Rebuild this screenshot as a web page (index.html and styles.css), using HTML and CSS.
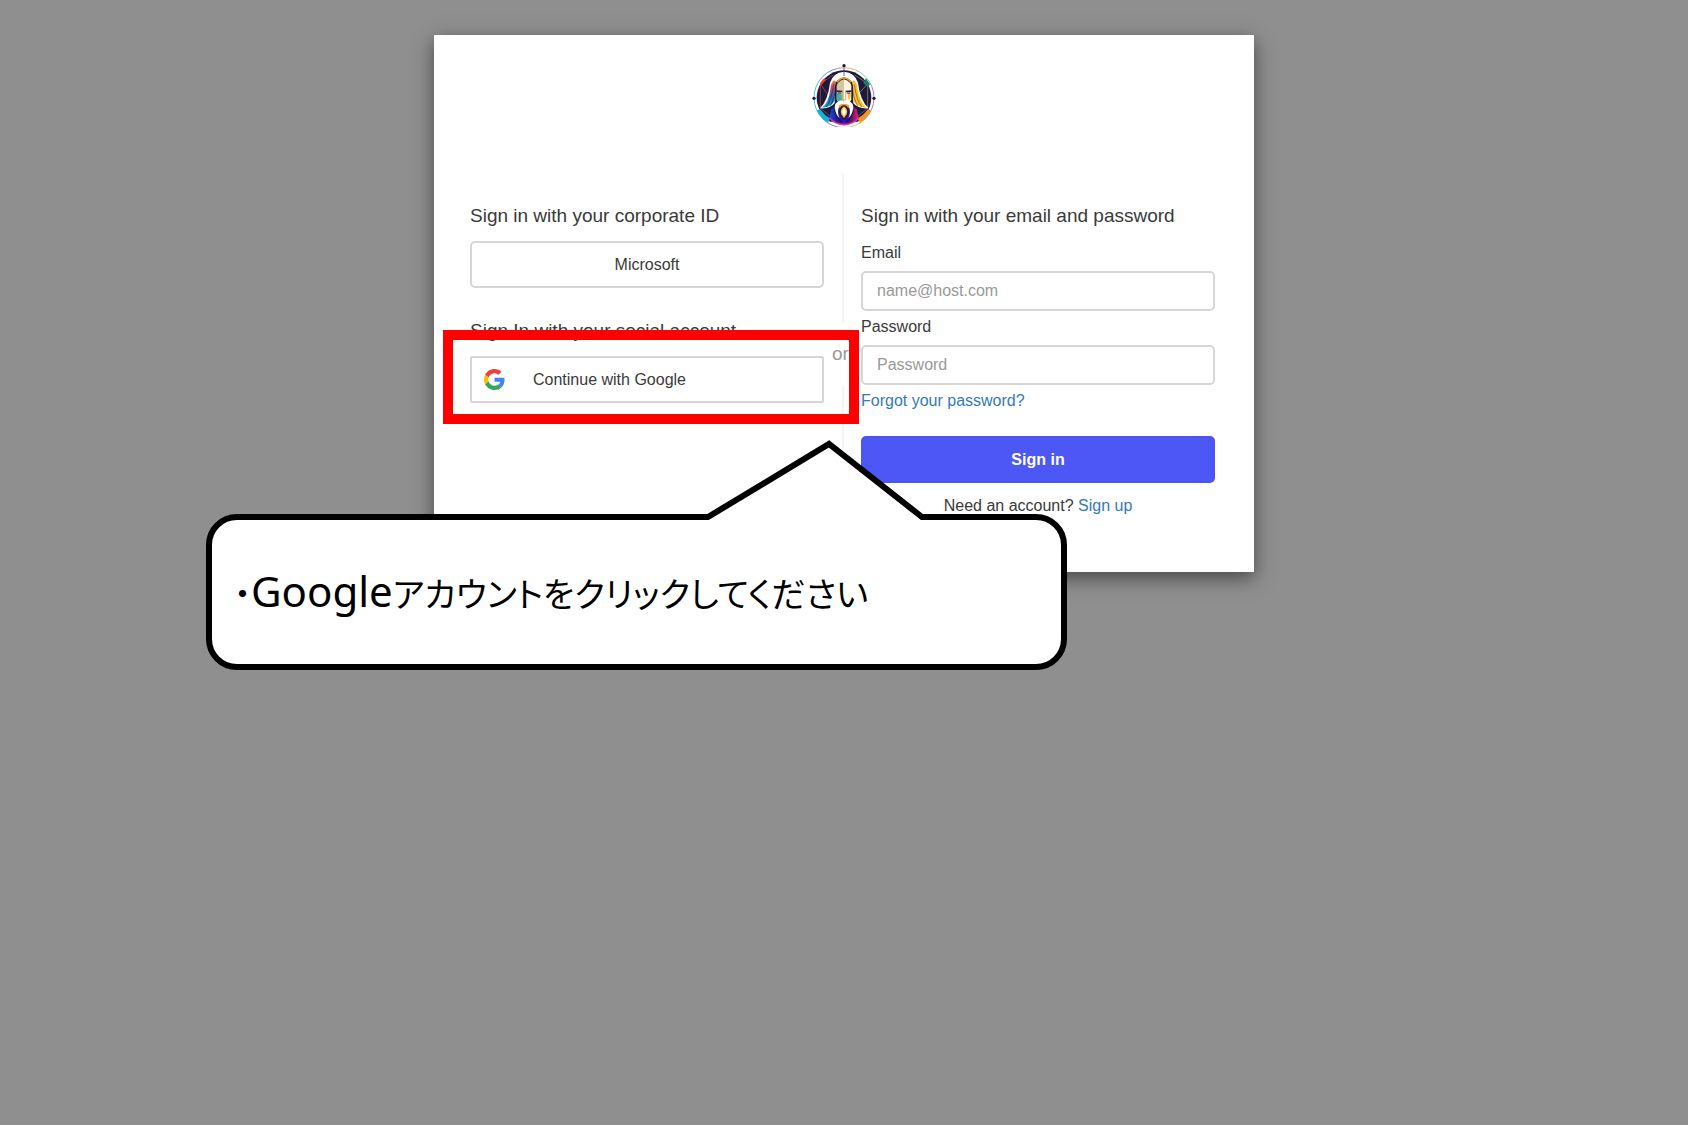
FILE: index.html
```html
<!DOCTYPE html>
<html lang="en">
<head>
<meta charset="utf-8">
<meta name="viewport" content="width=device-width, initial-scale=1">
<title>Sign in</title>
<link rel="stylesheet" href="styles.css">
</head>
<body>
<main class="card">
  <header class="card-header">
    <svg class="logo" viewBox="36 24 192 192" role="img" aria-label="Logo">
      <defs>
        <linearGradient id="ring" x1="0" y1="0" x2="1" y2="0">
          <stop offset="0" stop-color="#4fc3d8"/><stop offset=".3" stop-color="#7b7df0"/>
          <stop offset=".6" stop-color="#f5b860"/><stop offset=".85" stop-color="#5fe0a8"/><stop offset="1" stop-color="#b070e0"/>
        </linearGradient>
        <linearGradient id="hairL" x1="0" y1="0" x2="0" y2="1">
          <stop offset="0" stop-color="#f08030"/><stop offset=".3" stop-color="#c04a70"/><stop offset=".6" stop-color="#2a68b8"/><stop offset="1" stop-color="#10a8b8"/>
        </linearGradient>
        <linearGradient id="robe" x1="0" y1="0" x2="1" y2="0">
          <stop offset="0" stop-color="#1848d8"/><stop offset=".3" stop-color="#2018a0"/><stop offset=".5" stop-color="#3010e8"/><stop offset=".7" stop-color="#401080"/><stop offset="1" stop-color="#e82860"/>
        </linearGradient>
      </defs>
      <circle cx="132" cy="128" r="90" fill="none" stroke="url(#ring)" stroke-width="3"/>
      <path d="M132 46A82 82 0 0 0 60 167L90 200H174L204 167A82 82 0 0 0 132 46Z" fill="#1c1b3c"/>
      <g fill="none" stroke-width="2">
        <path d="M61 86L100 60M61 86L84 120M61 86V160" stroke="#d84848"/>
        <path d="M203 86L164 60M203 86V160M180 112L203 86" stroke="#b8925a"/>
        <path d="M61 160L96 188M203 160L168 188" stroke="#7868a8"/>
      </g>
      <path d="M61 94L62 82L72 70L78 74Z" fill="#e83a30"/>
      <path d="M198 70L210 88L204 96L190 84Z" fill="#12806c"/>
      <path d="M50 165Q62 190 84 204L90 190Q72 180 62 164Z" fill="#10b4d8"/>
      <path d="M214 165Q202 190 180 204L172 190Q192 180 202 164Z" fill="#ff9020"/>
      <path d="M88 190L94 162L112 152H152L170 162L176 190Q156 210 132 210Q108 210 88 190Z" fill="url(#robe)"/>
      <path d="M88 188Q104 207 132 209Q160 207 176 188" fill="none" stroke="#f02898" stroke-width="5"/>
      <path d="M104 166L112 186L126 202M160 166L152 186L138 202" fill="none" stroke="#1c1b3c" stroke-width="5"/>
      <path d="M132 50Q99 53 90 83Q84 136 60 160Q88 163 104 145Q107 100 108 86Q120 74 132 72Q144 74 156 86Q157 100 160 145Q176 163 206 160Q180 136 174 83Q165 53 132 50Z" fill="#fff"/>
      <path d="M103 76Q92 82 91 103Q86 145 66 158Q91 158 104 138Q106 103 110 82Z" fill="url(#hairL)"/>
      <path d="M161 76Q172 82 173 103Q180 145 200 158Q173 158 160 138Q158 103 154 82Z" fill="#fbc02d"/>
      <path d="M101 88Q94 140 78 156M107 90Q105 130 91 152" fill="none" stroke="#182958" stroke-width="2"/>
      <path d="M163 88Q170 140 186 156M157 90Q159 130 173 152" fill="none" stroke="#765014" stroke-width="2"/>
      <path d="M132 67Q106 72 105 96V139L113 166L132 190L151 166L159 139V96Q158 72 132 67Z" fill="#1c1b3c"/>
      <path d="M132 73Q111 80 110 94V134L118 146H132Z" fill="#d9c4a0"/>
      <path d="M132 73Q153 80 154 94V134L146 146H132Z" fill="#fff3da"/>
      <path d="M111 113L125 119L126 135L118 145L109 130Z" fill="#48ad96"/>
      <path d="M153 112L144 116L145 135L151 130Z" fill="#f6bb37"/>
      <path d="M111 82Q121 69 132 69Q144 69 153 82" fill="none" stroke="#f4a020" stroke-width="4"/>
      <path d="M109 106L127 107V111L110 111ZM155 106L137 107V111L154 111Z" fill="#222140"/>
      <path d="M114 114H124M140 114H150" stroke="#222140" stroke-width="3"/>
      <path d="M127 110V134H137V110" fill="none" stroke="#c49d60" stroke-width="2"/>
      <path d="M132 142Q125 132 112 141Q104 146 104 156Q107 180 119 190Q111 173 116 158Q122 150 132 150Q142 150 148 158Q153 173 145 190Q157 180 160 156Q160 146 152 141Q139 132 132 142Z" fill="#fff"/>
      <path d="M116 151Q122 146 132 146Q142 146 148 151Q143 160 145 167Q138 155 132 155Q126 155 119 167Q121 160 116 151Z" fill="#f4a020"/>
      <path d="M119 160Q114 180 132 196Q150 180 145 160Q139 150 132 151Q125 150 119 160Z" fill="#1c1b3c"/>
      <path d="M132 154Q118 164 124 178L132 190L140 178Q146 164 132 154Z" fill="#ffb52e"/>
      <path d="M132 158Q124 166 128 176L132 183L136 176Q140 166 132 158Z" fill="#fff"/>
      <path d="M132 39V63" stroke="#1c1b3c" stroke-width="2"/>
      <g fill="#1c1b3c"><circle cx="132" cy="32" r="5"/><circle cx="42" cy="130" r="5"/><circle cx="222" cy="130" r="5"/></g>
    </svg>
  </header>
  <div class="columns">
    <section class="column">
      <h2 class="title">Sign in with your corporate ID</h2>
      <button class="provider" type="button">Microsoft</button>
      <h2 class="title title-next">Sign In with your social account</h2>
      <button class="provider provider-google" type="button">
        <svg class="google" viewBox="0 0 48 48" aria-hidden="true">
          <path fill="#EA4335" d="M24 9.5c3.54 0 6.71 1.22 9.21 3.6l6.85-6.85C35.9 2.38 30.47 0 24 0 14.62 0 6.51 5.38 2.56 13.22l7.98 6.19C12.43 13.72 17.74 9.5 24 9.5z"/>
          <path fill="#4285F4" d="M46.98 24.55c0-1.57-.15-3.09-.38-4.55H24v9.02h12.94c-.58 2.96-2.26 5.48-4.78 7.18l7.73 6c4.51-4.18 7.09-10.36 7.09-17.65z"/>
          <path fill="#FBBC05" d="M10.53 28.59c-.48-1.45-.76-2.99-.76-4.59s.27-3.14.76-4.59l-7.98-6.19C.92 16.46 0 20.12 0 24c0 3.88.92 7.54 2.56 10.78l7.97-6.19z"/>
          <path fill="#34A853" d="M24 48c6.48 0 11.93-2.13 15.89-5.81l-7.73-6c-2.15 1.45-4.92 2.3-8.16 2.3-6.26 0-11.57-4.22-13.47-9.91l-7.98 6.19C6.51 42.62 14.62 48 24 48z"/>
        </svg>
        <span>Continue with Google</span>
      </button>
    </section>
    <div class="divider"><span class="or">or</span></div>
    <form class="column">
      <h2 class="title title-form">Sign in with your email and password</h2>
      <label class="label" for="email">Email</label>
      <input class="field" id="email" type="email" placeholder="name@host.com">
      <label class="label" for="password">Password</label>
      <input class="field" id="password" type="password" placeholder="Password">
      <a class="link forgot" href="#">Forgot your password?</a>
      <button class="submit" type="button">Sign in</button>
      <p class="signup">Need an account? <a class="link" href="#">Sign up</a></p>
    </form>
  </div>
  <div class="highlight"></div>
  <aside class="callout" lang="ja">
    <svg class="bubble" viewBox="0 0 861 232" aria-hidden="true">
      <path d="M31 79H502L623 6L716 79H830A28 28 0 0 1 858 107V201A28 28 0 0 1 830 229H31A28 28 0 0 1 3 201V107A28 28 0 0 1 31 79Z" fill="#fff" stroke="#000" stroke-width="6"/>
    </svg>
    <p class="message">・<span class="brand">Google</span>アカウントをクリックしてください</p>
  </aside>
</main>
</body>
</html>
```
FILE: styles.css
```css
* {
  box-sizing: border-box;
}

body {
  min-height: 100vh;
  margin: 0;
  padding: 35px 16px;
  background: #8f8f8f;
  color: #3a3a3a;
  font: 16px/20px "Liberation Sans", Arial, sans-serif;
}

.card {
  position: relative;
  max-width: 820px;
  margin: 0 auto;
  padding-bottom: 37px;
  background: #fff;
  box-shadow: 0 6px 18px rgba(0, 0, 0, 0.5);
}

.card-header {
  display: flex;
  justify-content: center;
  padding: 28px 0 46px;
}

.logo {
  width: 64px;
  height: 64px;
}

.columns {
  display: grid;
  grid-template-columns: 1fr 37px 1fr;
  padding: 0 39px 0 36px;
}

.column {
  display: flex;
  flex-direction: column;
  min-width: 0;
  padding: 31px 0 19px;
}

.title {
  margin: 0 0 13px;
  font-size: 19px;
  font-weight: 400;
  line-height: 24px;
}

.title-next {
  margin-top: 31px;
}

.title-form {
  margin-bottom: 15px;
}

.provider,
.submit {
  height: 47px;
  padding: 0 12px;
  border: 2px solid #d6d6d6;
  border-radius: 5px;
  background: #fff;
  color: #3a3a3a;
  font: inherit;
}

.provider-google {
  display: flex;
  align-items: center;
  gap: 28px;
  border-radius: 2px;
}

.google {
  width: 21px;
  height: 21px;
}

.divider {
  display: flex;
  align-items: center;
  justify-content: center;
  background: linear-gradient(#f3f3f3, #f3f3f3) center / 2px 100% no-repeat;
}

.or {
  padding: 21px 4px 21px 0;
  background: #fff;
  color: #999;
  font-size: 19px;
}

.label {
  margin-bottom: 8px;
}

.field {
  width: 100%;
  height: 40px;
  margin: 0 0 6px;
  padding: 0 14px;
  border: 2px solid #d6d6d6;
  border-radius: 5px;
  background: #fff;
  color: #3a3a3a;
  font: inherit;
}

.field::placeholder {
  color: #999;
}

.link {
  color: #337ab7;
  text-decoration: none;
}

.forgot {
  align-self: flex-start;
}

.submit {
  margin-top: 25px;
  border-color: #4b55f0;
  background: #4c57f5;
  color: #fff;
  font-weight: 700;
}

.signup {
  margin: 13px 0 0;
  text-align: center;
}

.highlight {
  position: absolute;
  top: 295px;
  left: 9px;
  width: 416px;
  height: 94px;
  border: 10px solid #f00;
}

.callout {
  position: absolute;
  top: 402px;
  left: -228px;
  width: 861px;
  padding: 124px 28px 48px;
}

.bubble {
  position: absolute;
  inset: 0;
  width: 100%;
  height: 100%;
}

.message {
  position: relative;
  margin: 0;
  color: #000;
  font: 34px/60px "Noto Sans CJK JP", sans-serif;
  font-feature-settings: "palt";
  white-space: nowrap;
}

.brand {
  font-family: "Noto Sans", sans-serif;
  font-size: 42px;
}
```
